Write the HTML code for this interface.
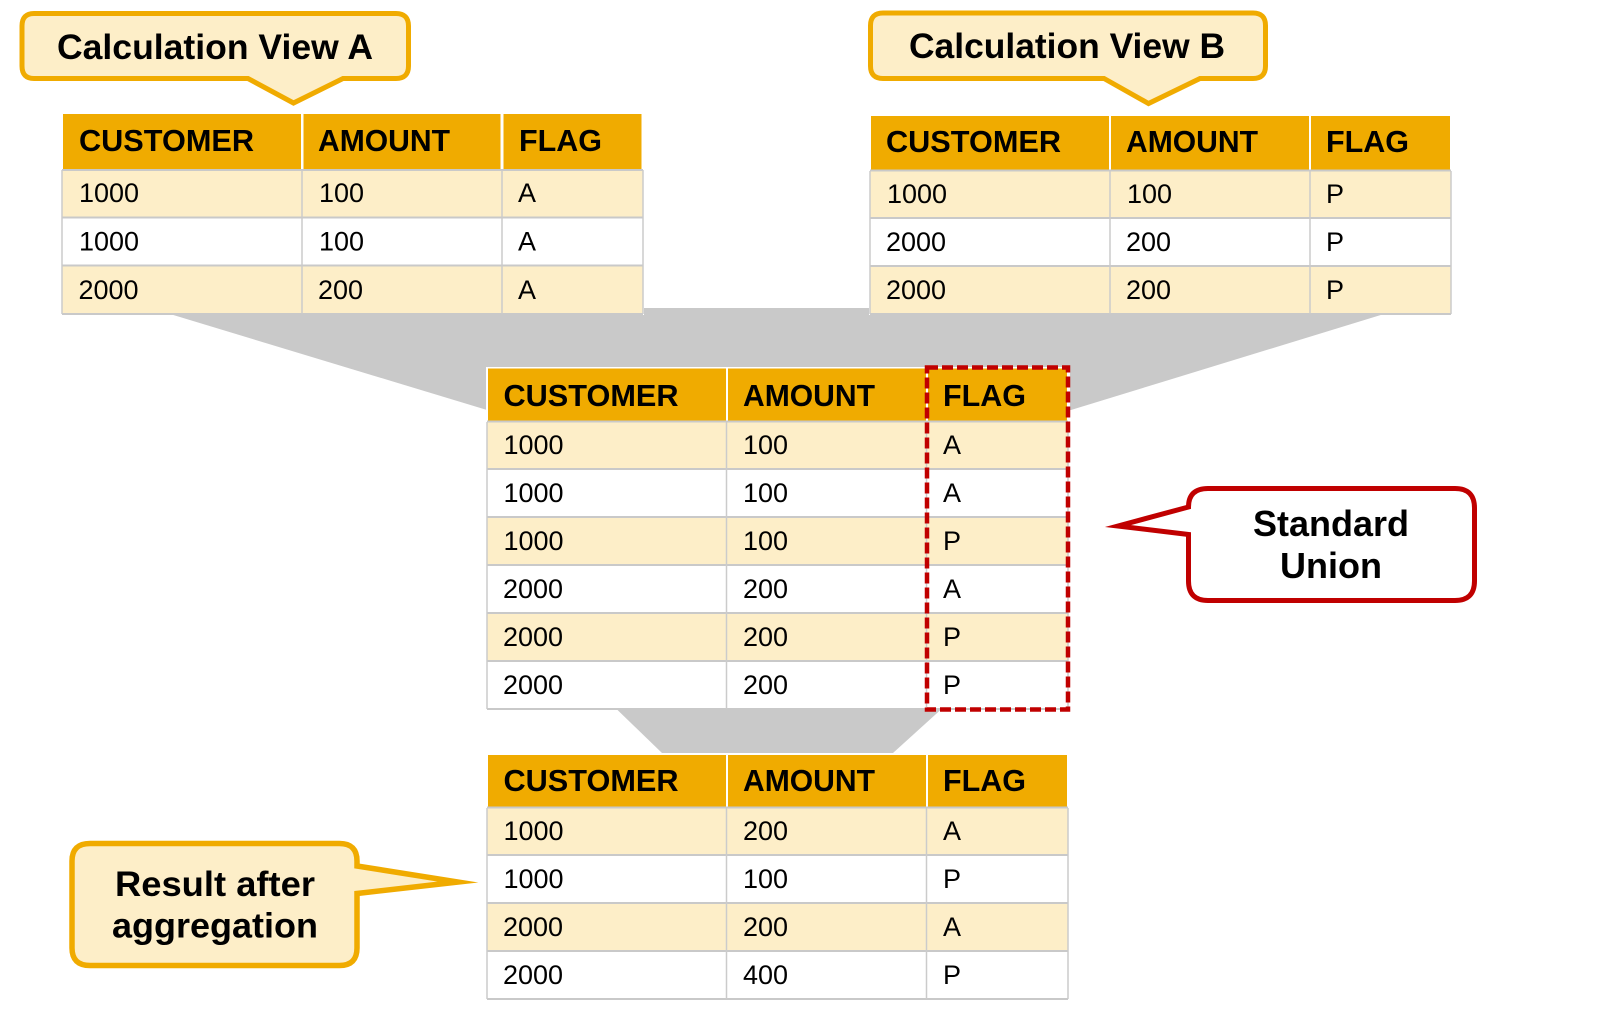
<!DOCTYPE html>
<html lang="en"><head><meta charset="utf-8"><title>Standard Union</title>
<style>
html,body{margin:0;padding:0;background:#fff;width:1600px;height:1010px;overflow:hidden}
svg{display:block}
text{font-family:"Liberation Sans",Arial,sans-serif;fill:#000}
.h{font-weight:bold;font-size:30.5px}
.b{font-size:27px}
.c{font-weight:bold;font-size:35.5px}
.hb{fill:#f0ab00}.cr{fill:#fdeec8}
.l{stroke:#c9c9c9;stroke-width:2;fill:none}
.v{stroke:#cbcbcb;stroke-width:1.5;fill:none}
path{stroke-miterlimit:30}
</style></head><body>
<svg width="1600" height="1010" viewBox="0 0 1600 1010" xmlns="http://www.w3.org/2000/svg">
<!-- funnels -->
<polygon fill="#c9c9c9" points="170,314 487,410 1071,410 1384,314 1384,308 170,308"/>

<!-- callout A -->
<path d="M34,13.5H396Q408.5,13.5 408.5,26V66Q408.5,78.5 396,78.5H343L293.500,103L248,78.5H34Q22,78.5 22,66V26Q22,13.5 34,13.5Z" fill="#fdeec8" stroke="#f0ab00" stroke-width="5"/>
<text class="c" x="57" y="59" textLength="316" lengthAdjust="spacingAndGlyphs">Calculation View A</text>

<!-- callout B -->
<path d="M883,13H1253Q1265.5,13 1265.5,25.5V66Q1265.5,78.5 1253,78.5H1200L1148.500,103.500L1104,78.5H883Q870.5,78.5 870.5,66V25.5Q870.5,13 883,13Z" fill="#fdeec8" stroke="#f0ab00" stroke-width="5"/>
<text class="c" x="909" y="58" textLength="316" lengthAdjust="spacingAndGlyphs">Calculation View B</text>

<!-- table A -->
<g>
<rect x="61" y="113" width="583" height="202" fill="#fff"/>
<rect class="hb" x="63" y="114" width="238" height="55"/><rect class="hb" x="303.500" y="114" width="197" height="55"/><rect class="hb" x="503.500" y="114" width="138" height="55"/>
<rect class="cr" x="62" y="170" width="581" height="47"/><rect class="cr" x="62" y="266" width="581" height="48"/>
<path class="l" d="M62,170H643M62,217.500H643M62,265.500H643M62,314H643"/>
<path class="v" d="M62,170V314M302,170V314M502,170V314M643,170V314"/>
<text class="h" x="79" y="151" textLength="175" lengthAdjust="spacingAndGlyphs">CUSTOMER</text><text class="h" x="318" y="151" textLength="132" lengthAdjust="spacingAndGlyphs">AMOUNT</text><text class="h" x="519" y="151" textLength="83" lengthAdjust="spacingAndGlyphs">FLAG</text>
<text class="b" x="79" y="202">1000</text><text class="b" x="319" y="202">100</text><text class="b" x="518" y="202">A</text>
<text class="b" x="79" y="250.500">1000</text><text class="b" x="319" y="250.500">100</text><text class="b" x="518" y="250.500">A</text>
<text class="b" x="78.500" y="299">2000</text><text class="b" x="318" y="299">200</text><text class="b" x="518" y="299">A</text>
</g>

<!-- table B -->
<g>
<rect x="869" y="115" width="583" height="200" fill="#fff"/>
<rect class="hb" x="871" y="116" width="238" height="53.500"/><rect class="hb" x="1111" y="116" width="198" height="53.500"/><rect class="hb" x="1311" y="116" width="139" height="53.500"/>
<rect class="cr" x="870" y="171" width="581" height="47"/><rect class="cr" x="870" y="267" width="581" height="47"/>
<path class="l" d="M870,170.500H1451M870,218H1451M870,266H1451M870,314H1451"/>
<path class="v" d="M870,171V314M1110,171V314M1310,171V314M1451,171V314"/>
<text class="h" x="886" y="152" textLength="175" lengthAdjust="spacingAndGlyphs">CUSTOMER</text><text class="h" x="1126" y="152" textLength="132" lengthAdjust="spacingAndGlyphs">AMOUNT</text><text class="h" x="1326" y="152" textLength="83" lengthAdjust="spacingAndGlyphs">FLAG</text>
<text class="b" x="887" y="203">1000</text><text class="b" x="1127" y="203">100</text><text class="b" x="1326" y="203">P</text>
<text class="b" x="886" y="251">2000</text><text class="b" x="1126" y="251">200</text><text class="b" x="1326" y="251">P</text>
<text class="b" x="886" y="299">2000</text><text class="b" x="1126" y="299">200</text><text class="b" x="1326" y="299">P</text>
</g>

<!-- table center -->
<g>
<rect x="486" y="367" width="584" height="343" fill="#fff"/>
<polygon fill="#c9c9c9" points="617,709.500 662,753 893,753 941,709.500"/>
<rect class="hb" x="488" y="368.500" width="238" height="52.500"/><rect class="hb" x="728" y="368.500" width="198" height="52.500"/><rect class="hb" x="928" y="368.500" width="139" height="52.500"/>
<rect class="cr" x="487" y="422" width="581" height="47"/><rect class="cr" x="487" y="518" width="581" height="47"/><rect class="cr" x="487" y="614" width="581" height="47"/>
<path class="l" d="M487,421.500H1068M487,469H1068M487,517H1068M487,565H1068M487,613H1068M487,661H1068M487,709H1068"/>
<path class="v" d="M487,422V709M726.500,422V709M926.500,422V709M1068,422V709"/>
<text class="h" x="503.500" y="406" textLength="175" lengthAdjust="spacingAndGlyphs">CUSTOMER</text><text class="h" x="743" y="406" textLength="132" lengthAdjust="spacingAndGlyphs">AMOUNT</text><text class="h" x="943" y="406" textLength="83" lengthAdjust="spacingAndGlyphs">FLAG</text>
<text class="b" x="503.500" y="454">1000</text><text class="b" x="743" y="454">100</text><text class="b" x="943" y="454">A</text>
<text class="b" x="503.500" y="502">1000</text><text class="b" x="743" y="502">100</text><text class="b" x="943" y="502">A</text>
<text class="b" x="503.500" y="550">1000</text><text class="b" x="743" y="550">100</text><text class="b" x="943" y="550">P</text>
<text class="b" x="503" y="598">2000</text><text class="b" x="743" y="598">200</text><text class="b" x="943" y="598">A</text>
<text class="b" x="503" y="646">2000</text><text class="b" x="743" y="646">200</text><text class="b" x="943" y="646">P</text>
<text class="b" x="503" y="694">2000</text><text class="b" x="743" y="694">200</text><text class="b" x="943" y="694">P</text>
</g>
<rect x="927" y="367.500" width="141" height="342" fill="none" stroke="#c00000" stroke-width="4.500" stroke-dasharray="11 4"/>

<!-- table bottom -->
<g>
<rect class="hb" x="488" y="755" width="238" height="52"/><rect class="hb" x="728" y="755" width="198" height="52"/><rect class="hb" x="928" y="755" width="139" height="52"/>
<rect class="cr" x="487" y="808" width="581" height="47"/><rect class="cr" x="487" y="904" width="581" height="47"/>
<path class="l" d="M487,807.500H1068M487,855H1068M487,903H1068M487,951H1068M487,999H1068"/>
<path class="v" d="M487,808V999M726.500,808V999M926.500,808V999M1068,808V999"/>
<text class="h" x="503.500" y="791" textLength="175" lengthAdjust="spacingAndGlyphs">CUSTOMER</text><text class="h" x="743" y="791" textLength="132" lengthAdjust="spacingAndGlyphs">AMOUNT</text><text class="h" x="943" y="791" textLength="83" lengthAdjust="spacingAndGlyphs">FLAG</text>
<text class="b" x="503.500" y="840">1000</text><text class="b" x="743" y="840">200</text><text class="b" x="943" y="840">A</text>
<text class="b" x="503.500" y="888">1000</text><text class="b" x="743" y="888">100</text><text class="b" x="943" y="888">P</text>
<text class="b" x="503" y="936">2000</text><text class="b" x="743" y="936">200</text><text class="b" x="943" y="936">A</text>
<text class="b" x="503" y="984">2000</text><text class="b" x="743" y="984">400</text><text class="b" x="943" y="984">P</text>
</g>

<!-- Standard Union callout -->
<path d="M1188.500,507Q1188.500,488.500 1208,488.500H1455Q1474.500,488.500 1474.500,508V581Q1474.500,600.500 1455,600.500H1208Q1188.500,600.500 1188.500,581V534.500L1118,526L1188.500,507Z" fill="#fff" stroke="#c00000" stroke-width="5"/>
<text class="c" x="1331" y="536" text-anchor="middle" style="font-size:36px">Standard</text>
<text class="c" x="1331" y="578" text-anchor="middle" style="font-size:36px">Union</text>

<!-- Result callout -->
<path d="M90,843.500H339.500Q357,843.500 357,861V866L458,882L357,893.500V948Q357,965.500 339.500,965.500H90Q72,965.500 72,948V861Q72,843.500 90,843.500Z" fill="#fdeec8" stroke="#f0ab00" stroke-width="5.500"/>
<text class="c" x="115" y="896" textLength="200" lengthAdjust="spacingAndGlyphs">Result after</text>
<text class="c" x="112" y="937.500" textLength="206" lengthAdjust="spacingAndGlyphs">aggregation</text>
</svg>
</body></html>
